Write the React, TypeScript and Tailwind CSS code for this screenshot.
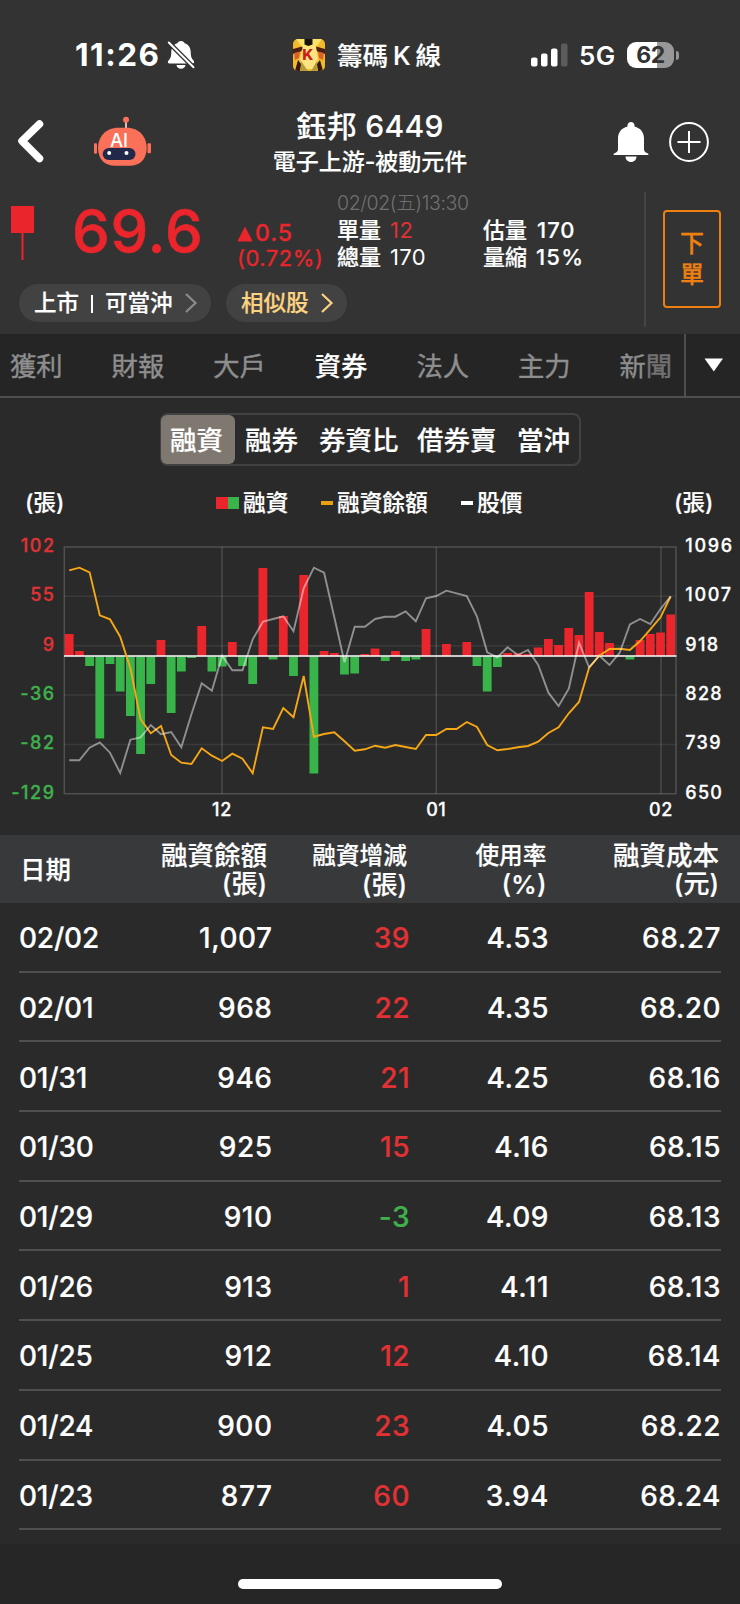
import type { ReactNode } from 'react';

type Tone = 'up' | 'down';

const FONT = "font-['Inter','Noto_Sans_CJK_TC',sans-serif]";

const changes = [
  22, 5, -9.5, -82, -7.5, -35, -59.5, -97.5, -27.5, 16, -56.5, -15, -1.5, 30, -15, -10, 14, -9.5, -27.5, 88,
  -3, 40, -19.5, 81, -117, 5, 3, -18, -17, 2, 7.5, -4.5, 5, -4.5, -3, 27, 0, 12, 0, 14,
  -9.5, -35, -10.5, 3, 2.5, 2, 8.5, 17, 11, 28, 21, 64, 24, 13, 0.5, -3, 16, 22, 23.5, 41.5,
];

const balance = [
  121, 113, 127, 256, 268, 320, 415, 568, 610, 588, 675, 698, 702, 655, 677, 693, 671, 686, 730, 592,
  597, 534, 562, 438, 620, 612, 607, 634, 662, 658, 647, 653, 645, 651, 657, 615, 615, 597, 597, 576,
  591, 645, 661, 657, 652, 648, 635, 609, 592, 550, 516, 413, 377, 357, 356, 360, 333, 298, 262, 199,
];

const price = [
  691, 691, 653, 637, 668, 729, 629, 622, 585, 613, 606, 652, 552, 460, 482, 377, 421, 421, 328, 275,
  267, 259, 304, 175, 113, 128, 262, 397, 290, 290, 267, 260, 260, 244, 274, 205, 198, 182, 190, 198,
  260, 367, 382, 352, 375, 360, 405, 488, 528, 476, 338, 412, 377, 405, 368, 283, 267, 282, 237, 199,
];

const leftAxis = ['102', '55', '9', '-36', '-82', '-129'];
const rightAxis = ['1096', '1007', '918', '828', '739', '650'];
const months = [
  { x: 222, label: '12' },
  { x: 436.3, label: '01' },
  { x: 661, label: '02' },
];

const rows: [string, string, string, string, string, Tone][] = [
  ['02/02', '1,007', '39', '4.53', '68.27', 'up'],
  ['02/01', '968', '22', '4.35', '68.20', 'up'],
  ['01/31', '946', '21', '4.25', '68.16', 'up'],
  ['01/30', '925', '15', '4.16', '68.15', 'up'],
  ['01/29', '910', '-3', '4.09', '68.13', 'down'],
  ['01/26', '913', '1', '4.11', '68.13', 'up'],
  ['01/25', '912', '12', '4.10', '68.14', 'up'],
  ['01/24', '900', '23', '4.05', '68.22', 'up'],
  ['01/23', '877', '60', '3.94', '68.24', 'up'],
];

const xAt = (i: number) => 69.2 + i * 10.195;
const toPoints = (values: number[]) => values.map((v, i) => `${xAt(i).toFixed(1)},${(v / 3).toFixed(1)}`).join(' ');

function BellOff() {
  return (
    <svg width="28" height="30" viewBox="0 0 28 30" className="ml-[4px] shrink-0">
      <path d="M14 1C12 1 10.800 2 10.300 3.300 6.500 4.600 4.300 8 4.300 12c0 4.500-.8 6.500-2.800 8.500C.300 21.800.800 23.500 2.500 23.500h23c1.700 0 2.200-1.700 1-3-2-2-2.800-4-2.800-8.500 0-4-2.200-7.400-6-8.700C17.200 2 16 1 14 1Z" fill="#fff" />
      <path d="M9.500 25h9c-.4 2.500-2.200 3.800-4.500 3.800S9.900 27.500 9.500 25Z" fill="#fff" />
      <path d="M1 1.700 27.500 28.300" stroke="#333333" strokeWidth="4.600" />
      <path d="M1.800 2.500 26.500 27.300" stroke="#fff" strokeWidth="2" strokeLinecap="round" />
    </svg>
  );
}

function AppBadge() {
  return (
    <svg width="32" height="32" viewBox="0 0 32 32" className="shrink-0">
      <defs>
        <clipPath id="badge">
          <rect width="32" height="32" rx="5" />
        </clipPath>
      </defs>
      <g clipPath="url(#badge)">
        <rect width="32" height="32" fill="#f3b92c" />
        <path d="M3 0h26l-6 8H9Z" fill="#fbe26a" />
        <path d="M0 10 9 7.500 10 10 7 13 0 15Z" fill="#4a1f12" />
        <path d="M32 10 23 7.500 22 10 25 13 32 15Z" fill="#4a1f12" />
        <path d="M1 14 7 12.500 6 19 2 21Z" fill="#d9622c" />
        <path d="M31 14 25 12.500 26 19 30 21Z" fill="#d9622c" />
        <path d="M10 7.500h13L25 20 21 30H11L7 20Z" fill="#fbe480" />
        <path d="M8 22 15 32H8ZM24 22 18 32h6Z" fill="#b79a3a" />
        <path d="M2 32 5 21 8 25 7 32ZM30 32 27 21 24 25 25 32Z" fill="#35170d" />
        <path d="M11.500 0h8v5.500l-4 1.500-4-1.500Z" fill="#15110c" />
        <text x="14.700" y="21" fontSize="15" fontWeight="800" fill="#c9201c" textAnchor="middle">K</text>
      </g>
    </svg>
  );
}

function Robot() {
  return (
    <svg width="60" height="52" viewBox="0 0 60 52" className="shrink-0">
      <path d="M33 7v6" stroke="#f9cfc4" strokeWidth="1.800" />
      <circle cx="33" cy="4.700" r="3" fill="#fb7059" />
      <rect x="1" y="28.300" width="3" height="10.500" rx="1" fill="#fb7059" />
      <rect x="54.500" y="28.300" width="3.500" height="10" rx="1" fill="#fb7059" />
      <path d="M25 12.700h9c12 0 19.700 9 19.700 20.300 0 11.500-7 17.700-17 17.700H22C12 50.700 5 44.500 5 33 5 21.700 13 12.700 25 12.700Z" fill="#fb7059" />
      <text x="26" y="31.800" fontSize="18.500" fontWeight="500" fill="#fff" textAnchor="middle">AI</text>
      <rect x="9.700" y="33" width="32.800" height="12" rx="6" fill="#222849" />
      <circle cx="16.200" cy="38" r="2" fill="#fff" />
      <circle cx="33.500" cy="38" r="2" fill="#fff" />
    </svg>
  );
}

function StatusBar() {
  return (
    <div className="flex h-[110px] items-center pl-[75px]">
      <span className="w-[88px] text-[31.500px] font-bold leading-none tracking-[1.500px]">11:26</span>
      <BellOff />
      <div className="ml-[98px] flex items-center">
        <AppBadge />
        <span className="ml-[12px] w-[193px] whitespace-nowrap pt-[2px] text-[25.500px] font-medium leading-none [-webkit-text-stroke:0.200px_white]">
          籌碼<span className="mx-[5px]">K</span>線
        </span>
      </div>
      <svg width="38" height="24" viewBox="0 0 38 24" className="shrink-0">
        <rect x="1" y="14.500" width="6.500" height="9" rx="2" fill="#fff" />
        <rect x="11" y="10.500" width="6.500" height="13" rx="2" fill="#fff" />
        <rect x="21" y="5.500" width="6.500" height="18" rx="2" fill="#fff" />
        <rect x="31" y="0.500" width="6.500" height="23" rx="2" fill="#5c5c5c" />
      </svg>
      <span className="ml-[11px] w-[48px] pt-[2px] text-[26px] font-semibold leading-none tracking-[0.300px]">5G</span>
      <div className="flex h-[26px] w-[47px] shrink-0 items-center justify-center rounded-[9px] bg-linear-to-r from-white from-63% to-[#989898] to-63% text-[23px] font-bold leading-none tracking-[-0.5px] text-[#333333]">
        62
      </div>
      <div className="ml-[2px] h-[9px] w-[3px] rounded-r-full bg-[#989898]" />
    </div>
  );
}

function TitleBar() {
  return (
    <div className="flex h-[82px] items-start">
      <svg width="30" height="46" viewBox="0 0 30 46" className="ml-[16px] mt-[8px] shrink-0">
        <path d="M23.500 6 6 23l17.500 17.500" fill="none" stroke="#fff" strokeWidth="7.500" strokeLinecap="round" strokeLinejoin="round" />
      </svg>
      <div className="ml-[47px] mt-[5px]">
        <Robot />
      </div>
      <div className="ml-[107px] flex w-[220px] flex-col items-center whitespace-nowrap [-webkit-text-stroke:0.150px_white]">
        <span className="text-[30px] font-medium leading-[32px] tracking-[0.300px]">鈺邦 6449</span>
        <span className="mt-[8px] text-[23px] font-medium leading-[24px]">電子上游-被動元件</span>
      </div>
      <svg width="36" height="42" viewBox="0 0 36 42" className="ml-[133px] mt-[11px] shrink-0">
        <path d="M18 1c-2 0-3.500 1.500-3.500 3.300v1.200C8.500 7 5 11.500 5 17.500V28c0 2.200-1 3.200-3.500 4.300C-.200 33 .300 34 1.800 34h32.400c1.500 0 2-1 .3-1.700C32 31.200 31 30.200 31 28V17.500c0-6-3.500-10.500-9.500-12V4.300C21.500 2.500 20 1 18 1Z" fill="#fff" />
        <path d="M12.500 35.500h11c0 3-2.300 5.500-5.500 5.500s-5.500-2.500-5.500-5.500Z" fill="#fff" />
      </svg>
      <svg width="42" height="42" viewBox="0 0 42 42" className="ml-[19px] mt-[11px] shrink-0" fill="none" stroke="#fff">
        <circle cx="21" cy="21" r="18.900" strokeWidth="2" />
        <path d="M9.500 21h23M21 10v22" strokeWidth="2" />
      </svg>
    </div>
  );
}

function Pill({ children, className, stroke }: { children: ReactNode; className: string; stroke: string }) {
  return (
    <div className={`flex h-[38px] items-center justify-between whitespace-nowrap rounded-full bg-[#424242] pr-[13px] pl-[15px] text-[22.500px] font-medium leading-none ${className}`}>
      <span className="[-webkit-text-stroke:0.200px_currentColor]">{children}</span>
      <svg width="14" height="22" viewBox="0 0 14 22" className={`shrink-0 ${stroke}`} fill="none" strokeWidth="2.200">
        <path d="M2 2l9.500 9L2 20" />
      </svg>
    </div>
  );
}

function Quote() {
  return (
    <div className="flex h-[142px]">
      <div className="flex w-[644px] flex-col">
        <div className="flex h-[92px]">
          <svg width="24" height="56" viewBox="0 0 24 56" className="ml-[11px] mt-[14px] shrink-0">
            <rect width="23" height="27" fill="#ea252c" />
            <rect x="10.500" y="27" width="2" height="27" fill="#ea252c" />
          </svg>
          <span className="ml-[37px] mt-[9px] w-[165px] text-[60px] font-medium leading-[60px] tracking-[0.800px] text-[#ea252c] [-webkit-text-stroke:0.600px_#ea252c]">69.6</span>
          <div className="mt-[29px] w-[100px] whitespace-nowrap text-[22px] leading-[25px] tracking-[0.500px] text-[#ea252c] [-webkit-text-stroke:0.300px_#ea252c]">
            <div className="flex items-center text-[23px] font-medium tracking-[0.900px]">
              <svg width="16" height="16" viewBox="0 0 16 16" className="mr-[2px]">
                <path d="M8 1.500 15 15H1Z" fill="#ea252c" stroke="#ea252c" strokeWidth="1" strokeLinejoin="round" />
              </svg>
              0.5
            </div>
            <div>(0.72%)</div>
          </div>
          <div className="flex flex-col whitespace-nowrap text-[22px]">
            <div className="mt-px h-[24px] text-[19.500px] font-light leading-[20px] tracking-[-0.400px] text-[#707070]">02/02(五)13:30</div>
            <div className="grid grid-cols-[146px_auto] leading-[27px]">
              <div><span className="font-medium [-webkit-text-stroke:0.200px_white]">單量</span><span className="ml-[9px] tracking-[0.500px] text-[#e03235]">12</span></div>
              <div className="font-medium [-webkit-text-stroke:0.200px_white]">估量<span className="ml-[10px] tracking-[1px]">170</span></div>
              <div><span className="font-medium [-webkit-text-stroke:0.200px_white]">總量</span><span className="ml-[9px] tracking-[0.300px]">170</span></div>
              <div className="font-medium [-webkit-text-stroke:0.200px_white]">量縮<span className="ml-[9px] tracking-[1.200px]">15%</span></div>
            </div>
          </div>
        </div>
        <div className="flex gap-[15px] pl-[19px]">
          <Pill className="w-[192px]" stroke="stroke-[#8b8b8b]">上市<span className="mx-[12px] inline-block h-[18px] w-[2px] bg-white align-[-2px]" />可當沖</Pill>
          <Pill className="w-[121px] text-[#fcd381]" stroke="stroke-[#fcd381]">相似股</Pill>
        </div>
      </div>
      <div className="h-[135px] w-[2px] bg-[#444444]" />
      <button className="ml-[17px] mt-[18px] flex h-[98px] w-[58px] flex-col items-center justify-center rounded-[4px] border-2 border-[#ee8012] text-[24px] font-medium leading-[31px] text-[#ee8012] [-webkit-text-stroke:0.300px_#ee8012]">
        <span>下</span>
        <span>單</span>
      </button>
    </div>
  );
}

function Tabs() {
  const tabs = ['獲利', '財報', '大戶', '資券', '法人', '主力'];
  return (
    <nav className="flex h-[64px] border-b-2 border-[#4e4e4e] bg-[#252525] text-[26.300px] leading-[66px] text-[#8e8e8e]">
      <div className="flex w-[684px] pl-[10px]">
        {tabs.map((t) => (
          <span
            key={t}
            className={
              t === '資券'
                ? 'w-[101.600px] shrink-0 font-medium text-white [-webkit-text-stroke:0.200px_white]'
                : 'w-[101.600px] shrink-0 [-webkit-text-stroke:0.400px_#8e8e8e]'
            }
          >
            {t}
          </span>
        ))}
        <span className="[-webkit-text-stroke:0.400px_#8e8e8e]">
          新<span className="text-[#727272] [-webkit-text-stroke:0.400px_#727272]">聞</span>
        </span>
      </div>
      <div className="flex flex-1 items-center border-l-2 border-[#4e4e4e] pl-[18px]">
        <svg width="20" height="14" viewBox="0 0 20 14">
          <path d="M0.500 0.500h18.500L9.800 13.500Z" fill="#fff" />
        </svg>
      </div>
    </nav>
  );
}

function Segments() {
  return (
    <div className="ml-[160px] mt-[15px] flex h-[53px] w-[421px] items-stretch rounded-[8px] border-2 border-[#424242] text-[26.500px] font-medium leading-[50px] [-webkit-text-stroke:0.200px_white]">
      <span className="-ml-px w-[74px] rounded-[6px] bg-[#7e7871] pl-[9px]">融資</span>
      <span className="ml-[10px] w-[74px]">融券</span>
      <span className="w-[98px]">券資比</span>
      <span className="w-[100px]">借券賣</span>
      <span>當沖</span>
    </div>
  );
}

function Legend() {
  return (
    <div className="mt-[21px] flex h-[32px] items-center whitespace-nowrap text-[22.700px] font-medium leading-none [-webkit-text-stroke:0.200px_white]">
      <span className="ml-[25px] w-[191px]">(張)</span>
      <i className="h-[12px] w-[12px] bg-[#ea252c]" />
      <i className="h-[12px] w-[11px] bg-[#38b44a]" />
      <span className="ml-[4px] w-[78px]">融資</span>
      <i className="h-[4px] w-[12px] bg-[#e9a011]" />
      <span className="ml-[4px] w-[124px]">融資餘額</span>
      <i className="h-[4px] w-[12px] bg-white" />
      <span className="ml-[4px] w-[197px]">股價</span>
      <span>(張)</span>
    </div>
  );
}

function Chart() {
  return (
    <svg width="740" height="315" viewBox="0 0 740 315" className="block" fontSize="18" fontWeight="500">
      <g stroke="#fff" strokeWidth="1.500">
        {[66.3, 115.7, 165, 214.5].map((y) => (
          <path key={y} d={`M64 ${y}H676`} strokeOpacity="0.08" />
        ))}
        {months.map((m) => (
          <path key={m.label} d={`M${m.x} 17V264`} strokeOpacity="0.15" />
        ))}
        <rect x="64.300" y="17" width="611.700" height="246.700" fill="none" strokeOpacity="0.18" />
      </g>
      {changes.map((v, i) => (
        <rect key={i} x={xAt(i) - 4.4} y={v > 0 ? 126 - v : 126.500} width="8.800" height={Math.abs(v)} fill={v > 0 ? '#ea252c' : '#38b44a'} />
      ))}
      <path d="M64 126H676.500" stroke="#fff" strokeWidth="1.600" />
      <polyline points={toPoints(balance)} fill="none" stroke="#f5a716" strokeWidth="1.900" />
      <polyline points={toPoints(price)} fill="none" stroke="#fff" strokeOpacity="0.480" strokeWidth="1.900" />
      <g strokeWidth="0.300">
        {leftAxis.map((t, i) => (
          <text key={t} x="55.500" y={22 + i * 49.3} textAnchor="end" letterSpacing="1.500" fill={i < 3 ? '#e03235' : '#3fb04c'} stroke={i < 3 ? '#e03235' : '#3fb04c'}>{t}</text>
        ))}
        {rightAxis.map((t, i) => (
          <text key={t} x="685.300" y={22 + i * 49.3} letterSpacing={i < 2 ? 1.700 : 1.300} fill="#fff" stroke="#fff">{t}</text>
        ))}
        {months.map((m) => (
          <text key={m.label} x={m.x} y="285.700" textAnchor="middle" letterSpacing="0.600" fill="#fff" stroke="#fff">{m.label}</text>
        ))}
      </g>
    </svg>
  );
}

function Table() {
  return (
    <section>
      <div className="grid h-[68px] grid-cols-[251px_140px_139.500px_172.500px] items-center bg-[#38393b] pl-[16px] text-right text-[26.500px] font-medium leading-[28px] [-webkit-text-stroke:0.200px_white]">
        <div className="flex items-center justify-between">
          <span className="ml-[4px] pt-px text-[25.500px]">日期</span>
          <span>融資餘額<br /><span className="text-[26px]">(張)</span></span>
        </div>
        <span><span className="text-[23.700px]">融資增減</span><br /><span className="text-[26px]">(張)</span></span>
        <span><span className="text-[23.700px]">使用率</span><br /><span className="text-[26px]">(%)</span></span>
        <span>融資成本<br /><span className="text-[26px]">(元)</span></span>
      </div>
      <div className="mx-[19px]">
        {rows.map(([date, bal, diff, rate, cost, tone]) => (
          <div
            key={date}
            className="grid h-[69.700px] grid-cols-[100px_153.500px_137.500px_139px_172px] items-center border-b-2 border-[#505050] pt-[3px] text-right text-[28px] font-medium leading-none tracking-[0.500px] [-webkit-text-stroke:0.200px_currentColor]"
          >
            <span className="text-left tracking-[-0.200px]">{date}</span>
            <span>{bal}</span>
            <span className={tone === 'up' ? 'text-[#e03235]' : 'text-[#3fb04c]'}>{diff}</span>
            <span>{rate}</span>
            <span>{cost}</span>
          </div>
        ))}
      </div>
    </section>
  );
}

export default function App() {
  return (
    <main className={`flex h-[1604px] w-[740px] flex-col overflow-hidden bg-[#2a2a2a] text-white ${FONT}`}>
      <header className="h-[334px] bg-[#333333]">
        <StatusBar />
        <TitleBar />
        <Quote />
      </header>
      <Tabs />
      <Segments />
      <Legend />
      <div className="mt-[11px] h-[305px] overflow-hidden">
        <Chart />
      </div>
      <Table />
      <footer className="mt-auto flex h-[60px] justify-center bg-[#262626] pt-[35px]">
        <div className="h-[10px] w-[264px] rounded-full bg-white" />
      </footer>
    </main>
  );
}
